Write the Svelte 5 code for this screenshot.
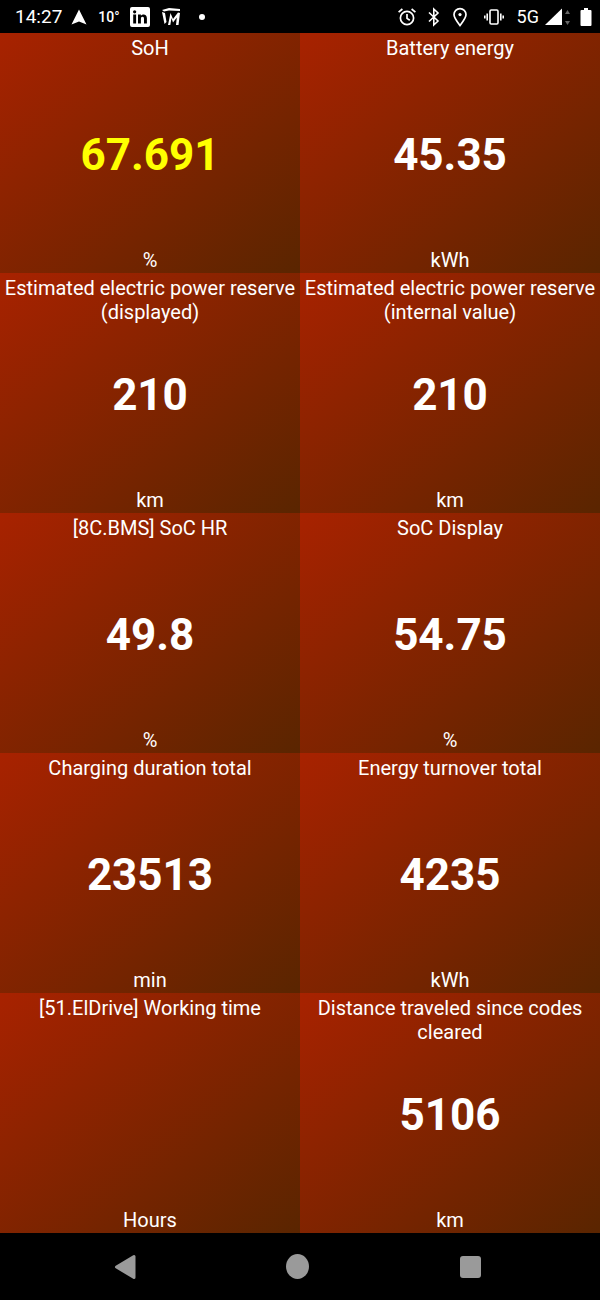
<script>
  const cells = [
    { title: 'SoH', value: '67.691', unit: '%', warn: true },
    { title: 'Battery energy', value: '45.35', unit: 'kWh' },
    { title: 'Estimated electric power reserve (displayed)', value: '210', unit: 'km' },
    { title: 'Estimated electric power reserve (internal value)', value: '210', unit: 'km' },
    { title: '[8C.BMS] SoC HR', value: '49.8', unit: '%' },
    { title: 'SoC Display', value: '54.75', unit: '%' },
    { title: 'Charging duration total', value: '23513', unit: 'min' },
    { title: 'Energy turnover total', value: '4235', unit: 'kWh' },
    { title: '[51.ElDrive] Working time', value: '', unit: 'Hours' },
    { title: 'Distance traveled since codes cleared', value: '5106', unit: 'km' }
  ];
</script>

<div class="screen">
  <header class="status">
    <div class="status-left">
      <span class="time">14:27</span>
      <svg class="nav-arrow" width="16" height="16" viewBox="0 0 16 16"><path d="M8 0.5 L15.5 15.5 L8 12.5 L0.5 15.5 Z" fill="#fff" /></svg>
      <span class="temp">10°</span>
      <svg class="linkedin" width="20" height="20" viewBox="0 0 20 20">
        <path fill="#fff" fill-rule="evenodd" d="M2 0h16a2 2 0 0 1 2 2v16a2 2 0 0 1-2 2H2a2 2 0 0 1-2-2V2a2 2 0 0 1 2-2zM3.2 7.6v9h2.9v-9zM4.65 3.2a1.6 1.6 0 1 0 0 3.3 1.6 1.6 0 0 0 0-3.3zM8 7.6v9h2.9v-4.7c0-1.3.5-2.2 1.6-2.2s1.5.9 1.5 2.2v4.7h2.9v-5.3c0-2.6-1.3-3.9-3.3-3.9-1.3 0-2.2.6-2.7 1.4V7.6z" />
      </svg>
      <svg class="mlogo" width="20" height="20" viewBox="0 0 20 20">
        <path fill="#fff" d="M1 3 L8 1 L19 2 L19 4 L8 3.4 L3 4.4 Z M1 5 L4 6 L5.5 15 L3.5 17 Z M7 18 L9.5 6 L12 12 L17 5.5 L19 6 L17.5 18 L15 18 L15.8 10.5 L12 15.5 L10.5 11 L9.3 18 Z" />
      </svg>
      <span class="dot"></span>
    </div>
    <div class="status-right">
      <svg width="20" height="20" viewBox="0 0 20 20" fill="none" stroke="#fff" stroke-width="1.7">
        <circle cx="10" cy="11" r="6.6" />
        <path d="M10 7v4.4l2.8 1.8" />
        <path d="M1.6 5.2 L5.4 2 M18.4 5.2 L14.6 2" />
      </svg>
      <svg width="14" height="20" viewBox="0 0 14 20" fill="none" stroke="#fff" stroke-width="1.6">
        <path d="M2 5.5 L11 14 L6.8 18 V2 L11 6 L2 14.5" />
      </svg>
      <svg class="pin" width="16" height="20" viewBox="0 0 16 20" fill="none" stroke="#fff" stroke-width="1.7">
        <path d="M8 18.5 C4.5 14 2 11 2 7.6 a6 6 0 0 1 12 0 C14 11 11.5 14 8 18.5 Z" />
        <circle cx="8" cy="7.6" r="1.6" fill="#fff" stroke="none" />
      </svg>
      <svg class="vibrate" width="20" height="20" viewBox="0 0 20 20" fill="none" stroke="#fff" stroke-width="1.6">
        <rect x="6" y="3" width="8" height="14" rx="1.2" />
        <path d="M3.2 6.5v7M16.8 6.5v7" />
        <path d="M0.8 8.5v3M19.2 8.5v3" />
      </svg>
      <span class="net">5G</span>
      <svg class="signal" width="28" height="20" viewBox="0 0 28 20">
        <path d="M1 18 L18 1.5 V18 Z" fill="#fff" />
        <path d="M23.5 3 L26 7 H21 Z M23.5 18 L26 14 H21 Z" fill="#666" />
      </svg>
      <svg class="battery" width="12" height="20" viewBox="0 0 12 20">
        <path d="M4 1h4v2h2.5a1 1 0 0 1 1 1v14a1 1 0 0 1-1 1H1.5a1 1 0 0 1-1-1V4a1 1 0 0 1 1-1H4Z" fill="#fff" />
      </svg>
    </div>
  </header>

  <main class="grid">
    {#each cells as cell}
      <section class="cell">
        <div class="title">{cell.title}</div>
        <div class="value" class:warn={cell.warn}>{cell.value}</div>
        <div class="unit">{cell.unit}</div>
      </section>
    {/each}
  </main>

  <footer class="navbar">
    <svg width="24" height="26" viewBox="0 0 24 26"><path d="M20 2.5 V23.5 L2.5 13 Z" fill="#9a9a9a" stroke="#9a9a9a" stroke-width="3" stroke-linejoin="round" /></svg>
    <span class="home"></span>
    <span class="recent"></span>
  </footer>
</div>

<style>
  :global(body) {
    background: #000;
  }

  .screen {
    width: 600px;
    height: 1300px;
    display: flex;
    flex-direction: column;
    font-family: Roboto, "Liberation Sans", sans-serif;
    color: #fff;
    overflow: hidden;
  }

  .status {
    height: 33px;
    flex: none;
    background: #000;
    display: flex;
    justify-content: space-between;
    align-items: center;
    padding: 0 8px 0 15px;
  }

  .status-left,
  .status-right {
    display: flex;
    align-items: center;
  }

  .time {
    font-size: 19px;
    margin-right: 9px;
  }

  .temp {
    font-size: 14px;
    font-weight: 500;
    margin: 0 10px 0 11px;
  }

  .mlogo {
    margin-left: 11px;
  }

  .dot {
    width: 6px;
    height: 6px;
    border-radius: 50%;
    background: #fff;
    margin-left: 18px;
  }

  .status-right {
    gap: 10px;
  }

  .pin {
    margin-left: 1px;
  }

  .vibrate {
    margin-left: 6px;
  }

  .net {
    font-size: 18px;
    margin-left: 3px;
  }

  .signal {
    margin-left: -5px;
  }

  .battery {
    margin-left: -2px;
  }

  .grid {
    height: 1200px;
    flex: none;
    display: grid;
    grid-template-columns: 300px 300px;
    grid-template-rows: repeat(5, 240px);
  }

  .cell {
    display: grid;
    text-align: center;
    background: linear-gradient(to bottom right, #a82200, #5a2500);
    font-size: 20px;
    line-height: 24px;
  }

  .title,
  .value,
  .unit {
    grid-area: 1 / 1;
    min-width: 0;
  }

  .title {
    align-self: start;
    margin: 3px -3px 0;
  }

  .value {
    align-self: center;
    font-size: 44px;
    line-height: 50px;
    font-weight: 700;
    margin-top: 4px;
  }

  .warn {
    color: #ffff00;
  }

  .unit {
    align-self: end;
    margin-bottom: 1px;
  }

  .navbar {
    flex: 1;
    background: #000;
    display: flex;
    align-items: center;
    padding-left: 114px;
    gap: 0;
  }

  .home {
    width: 23px;
    height: 25px;
    border-radius: 50%;
    background: #9a9a9a;
    margin-left: 148px;
  }

  .recent {
    width: 21px;
    height: 22px;
    border-radius: 3px;
    background: #9a9a9a;
    margin-left: 151px;
  }
</style>
